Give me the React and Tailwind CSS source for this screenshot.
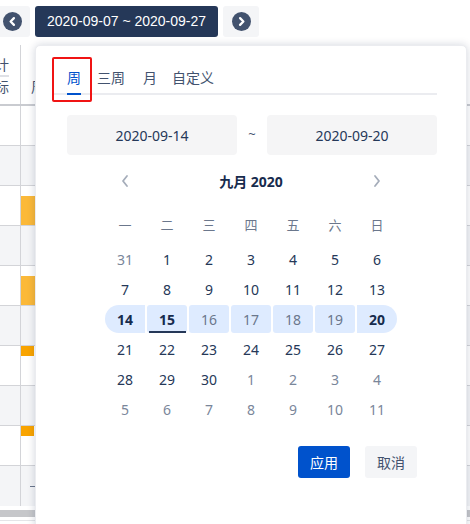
import React from "react";

const font = { fontFamily: '"Noto Sans", "Noto Sans CJK SC", sans-serif' };

const weeks = [
  [31, 1, 2, 3, 4, 5, 6],
  [7, 8, 9, 10, 11, 12, 13],
  [14, 15, 16, 17, 18, 19, 20],
  [21, 22, 23, 24, 25, 26, 27],
  [28, 29, 30, 1, 2, 3, 4],
  [5, 6, 7, 8, 9, 10, 11],
];

const rows = [
  { gray: false, bar: null },
  { gray: true, bar: null },
  { gray: false, bar: "bottom" },
  { gray: true, bar: null },
  { gray: false, bar: "bottom" },
  { gray: true, bar: null },
  { gray: false, bar: "top" },
  { gray: true, bar: null },
  { gray: false, bar: "top" },
  { gray: true, bar: "dash" },
];

const Circle = ({ dir }) => (
  <svg width="19" height="19" viewBox="0 0 20 20">
    <circle cx="10" cy="10" r="10" fill="#42526e" />
    <path
      d={dir === "left" ? "M11.5 6.5 L8 10 L11.5 13.5" : "M8.5 6.5 L12 10 L8.5 13.5"}
      stroke="#fff"
      strokeWidth="2.4"
      fill="none"
      strokeLinecap="round"
      strokeLinejoin="round"
    />
  </svg>
);

const Chevron = ({ dir }) => (
  <svg width="10" height="14" viewBox="0 0 10 14">
    <path
      d={dir === "left" ? "M7 2 L3 7 L7 12" : "M3 2 L7 7 L3 12"}
      stroke="#a5adba"
      strokeWidth="1.8"
      fill="none"
      strokeLinecap="round"
      strokeLinejoin="round"
    />
  </svg>
);

const DayCell = ({ d, wi, di }) => {
  const outside = (wi === 0 && di === 0) || (wi === 4 && di > 2) || wi === 5;
  const selected = wi === 2;
  const strong = selected && (di === 0 || di === 1 || di === 6);
  let round = "";
  if (selected && di === 0) round = "rounded-l-full rounded-r-[3px]";
  else if (selected && di === 6) round = "rounded-r-full rounded-l-[3px]";
  else if (selected) round = "rounded-[3px]";
  let color = "text-[#253858]";
  if (outside) color = "text-[#7a869a]";
  if (selected) color = strong ? "text-[#172b4d]" : "text-[#6b778c]";
  return (
    <div className="h-[30px] py-[1px] px-[1px]">
      <div
        className={`relative h-full flex items-center justify-center text-[14px] ${color} ${
          selected ? "bg-[#deebff]" : ""
        } ${round} ${strong ? "font-bold" : ""}`}
      >
        {d}
        {selected && di === 1 && (
          <span className="absolute left-[2px] right-[1px] bottom-0 h-[2px] bg-[#253858]" />
        )}
      </div>
    </div>
  );
};

export default function App() {
  return (
    <div className="relative w-[470px] h-[524px] overflow-hidden bg-white" style={font}>
      {/* top bar */}
      <div className="flex items-center gap-[5px] pt-[6px] h-[31px] box-content">
        <div className="w-[36px] h-[31px] -ml-[6px] bg-[#f4f5f7] rounded-[3px] flex items-center justify-center">
          <Circle dir="left" />
        </div>
        <div
          className="w-[183px] h-[31px] bg-[#253858] rounded-[3px] flex items-center justify-center text-white text-[14px]"
          style={{ fontFamily: '"Liberation Sans", Arial, sans-serif' }}
        >
          2020-09-07 ~ 2020-09-27
        </div>
        <div className="w-[36px] h-[31px] bg-[#f4f5f7] rounded-[3px] flex items-center justify-center">
          <Circle dir="right" />
        </div>
      </div>

      {/* background table */}
      <div className="mt-[8px] flex flex-col">
        <div className="flex h-[61px] border-b-2 border-[#c9cbd0]">
          <div className="w-[21px] border-r border-[#d3d4d8] overflow-visible flex flex-col justify-end items-end pr-[11px] pb-[7px]">
            <div className="text-[14px] leading-[20px] text-[#42526e] border-b-2 border-[#dfe1e6] whitespace-nowrap">统计</div>
            <div className="text-[14px] leading-[20px] text-[#42526e] whitespace-nowrap">指标</div>
          </div>
          <div className="flex-1 flex items-end pb-[7px] pl-[10px] text-[14px] leading-[20px] text-[#42526e] whitespace-nowrap">
            周期
          </div>
        </div>
        {rows.map((r, i) => (
          <div
            key={i}
            className={`flex h-[40px] ${i < rows.length - 1 ? "border-b border-[#d3d4d8]" : ""} ${
              r.gray ? "bg-[#f4f5f7]" : "bg-white"
            }`}
          >
            <div className="w-[21px] border-r border-[#d3d4d8]" />
            <div className="flex-1 flex flex-col">
              {r.bar === "bottom" && (
                <>
                  <div className="h-[10px]" />
                  <div className="h-[29px] w-[20px] bg-[#fbb939]" />
                </>
              )}
              {r.bar === "top" && <div className="h-[10px] w-[13px] bg-[#f9a400]" />}
              {r.bar === "dash" && (
                <div className="flex-1 flex items-center pl-[9px]">
                  <div className="w-[6px] h-[1px] bg-[#6b778c]" />
                </div>
              )}
            </div>
          </div>
        ))}
        <div className="h-[4px]" />
        <div className="h-[7px] bg-[#c6c7ca]" />
        <div className="h-[3px]" />
        <div className="h-[1px] bg-[#e4e5e8]" />
      </div>

      {/* popup */}
      <div className="absolute left-[35px] top-[45px] w-[432px] h-[490px] bg-white rounded-[5px] border border-[#ebecf0] shadow-[0_0_8px_rgba(9,30,66,0.18)]">
        <div className="absolute left-[16px] top-[11px] w-[40px] h-[45px] border-2 border-[#f01414] rounded-[2px]" />

        <div className="ml-[17px] mr-[29px] mt-[22px] flex border-b-2 border-[#ebecf0] text-[14px] leading-[20px]">
          <div className="ml-[14px] pb-[5px] -mb-[2px] border-b-2 border-[#0052cc] text-[#0052cc]">周</div>
          <div className="ml-[16px] pb-[5px] text-[#42526e]">三周</div>
          <div className="ml-[18px] pb-[5px] text-[#42526e]">月</div>
          <div className="ml-[15px] pb-[5px] text-[#42526e]">自定义</div>
        </div>

        <div className="mt-[20px] ml-[31px] flex items-center">
          <div className="w-[170px] h-[40px] bg-[#f5f5f6] rounded-[4px] flex items-center justify-center text-[14px] text-[#253858]">
            2020-09-14
          </div>
          <div className="w-[30px] text-center text-[13px] text-[#42526e]">~</div>
          <div className="w-[170px] h-[40px] bg-[#f5f5f6] rounded-[4px] flex items-center justify-center text-[14px] text-[#253858]">
            2020-09-20
          </div>
        </div>

        <div className="mx-auto w-[294px]">
          <div className="mt-[14px] h-[24px] grid grid-cols-7 items-center">
            <div className="flex justify-center">
              <Chevron dir="left" />
            </div>
            <div className="col-span-5 text-center text-[14px] font-bold text-[#172b4d]">九月 2020</div>
            <div className="flex justify-center">
              <Chevron dir="right" />
            </div>
          </div>

          <div className="mt-[18px] h-[30px] grid grid-cols-7 items-center text-center text-[13px] text-[#6b778c]">
            {["一", "二", "三", "四", "五", "六", "日"].map((w) => (
              <div key={w}>{w}</div>
            ))}
          </div>

          <div className="mt-[3px] flex flex-col">
            {weeks.map((wk, wi) => (
              <div key={wi} className="grid grid-cols-7">
                {wk.map((d, di) => (
                  <DayCell key={di} d={d} wi={wi} di={di} />
                ))}
              </div>
            ))}
          </div>
        </div>

        <div className="mt-[22px] mr-[49px] flex justify-end gap-[15px] text-[14px]">
          <div className="w-[52px] h-[32px] rounded-[3px] bg-[#0052cc] text-white flex items-center justify-center">应用</div>
          <div className="w-[52px] h-[32px] rounded-[3px] bg-[#f4f5f7] text-[#42526e] flex items-center justify-center">取消</div>
        </div>
      </div>
    </div>
  );
}
